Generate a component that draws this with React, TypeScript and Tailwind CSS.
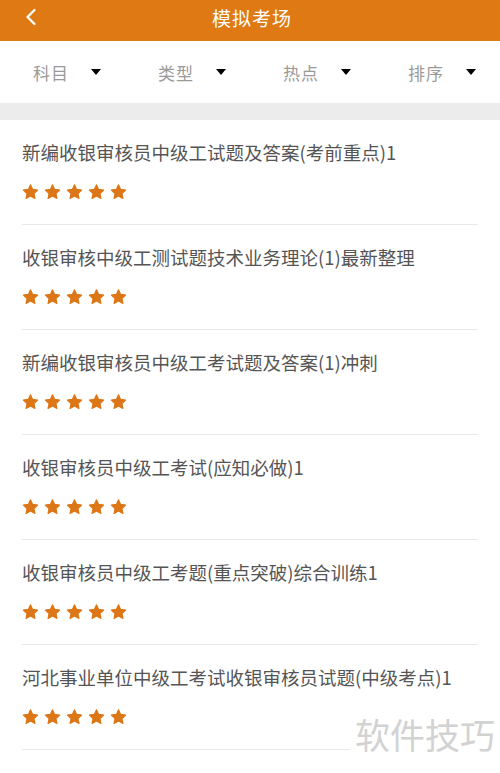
import { ChevronLeft } from "lucide-react";

const items = [
  "新编收银审核员中级工试题及答案(考前重点)1",
  "收银审核中级工测试题技术业务理论(1)最新整理",
  "新编收银审核员中级工考试题及答案(1)冲刺",
  "收银审核员中级工考试(应知必做)1",
  "收银审核员中级工考题(重点突破)综合训练1",
  "河北事业单位中级工考试收银审核员试题(中级考点)1",
  "新编收银审核员中级工考试题库(含答案)1",
];

const filters = ["科目", "类型", "热点", "排序"];

function Star() {
  return (
    <svg width="17" height="16" viewBox="0 0 24 23">
      <path
        d="M12 1.2l3.1 6.6 7.2.9-5.3 5 1.4 7.1L12 17.3l-6.4 3.5 1.4-7.1-5.3-5 7.2-.9z"
        fill="#dc7616"
        stroke="#dc7616"
        strokeWidth="1.6"
        strokeLinejoin="round"
      />
    </svg>
  );
}

export default function App() {
  return (
    <div
      className="relative w-[500px] h-[773px] overflow-hidden bg-white"
      style={{ fontFamily: '"Noto Sans CJK SC", "Noto Sans", sans-serif' }}
    >
      <header className="relative h-[41px] bg-[#de7914] flex justify-center">
        <ChevronLeft className="absolute left-[17px] top-[3px] text-white" size={28} strokeWidth={2} />
        <h1 className="pt-[8px] pl-[4px] text-white text-[19px] leading-none tracking-[1px]">模拟考场</h1>
      </header>

      <div className="h-[62px] grid grid-cols-4">
        {filters.map((f) => (
          <div key={f} className="flex items-center pl-[33px]">
            <span className="text-[#9a9a9a] text-[17px] leading-none tracking-[1px]">{f}</span>
            <span className="ml-[22px] w-0 h-0 border-l-[5px] border-r-[5px] border-t-[6px] border-l-transparent border-r-transparent border-t-black" />
          </div>
        ))}
      </div>

      <div className="h-[17px] bg-[#ececec]" />

      <ul className="px-[22px]">
        {items.map((t, i) => (
          <li key={i} className="pt-[20px] pb-[24px] border-b border-[#e8e8e8]">
            <p className="text-[#555555] text-[18.5px] leading-[24px] whitespace-nowrap">{t}</p>
            <div className="mt-[20px] flex gap-[5px] h-[16px]">
              {[0, 1, 2, 3, 4].map((s) => (
                <Star key={s} />
              ))}
            </div>
          </li>
        ))}
      </ul>

      <div className="absolute left-[350px] top-[711px] bg-white pl-[5px] pr-[6px] text-[35px] leading-[46px] text-[#d2d2d2] whitespace-nowrap">
        软件技巧
      </div>
    </div>
  );
}
